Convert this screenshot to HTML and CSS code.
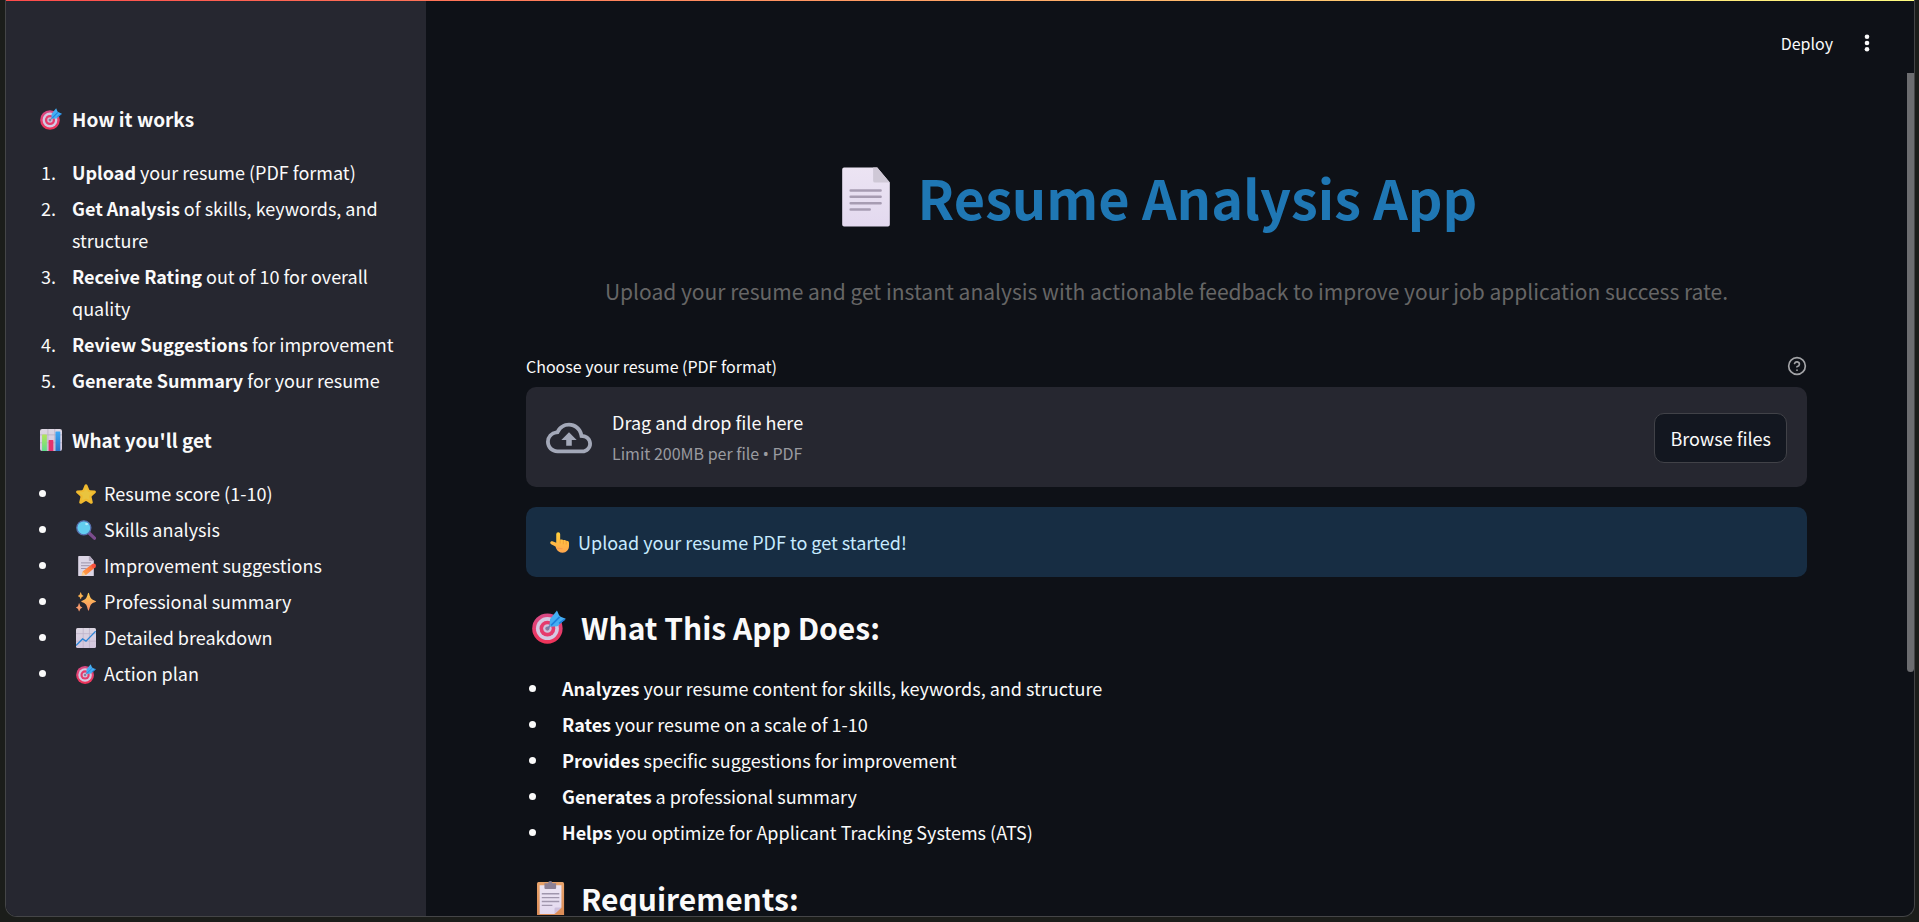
FILE: index.html
```html
<!DOCTYPE html>
<html lang="en">
<head>
<meta charset="utf-8">
<title>Resume Analysis App</title>
<link rel="stylesheet" href="styles.css">
</head>
<body>
<svg class="sprite" aria-hidden="true">
  <defs>
    <linearGradient id="paper" x1="0" y1="0" x2="0" y2="1"><stop offset="0" stop-color="#ece4f3"/><stop offset="1" stop-color="#e3d9ef"/></linearGradient>
    <linearGradient id="chartbg" x1="0" y1="0" x2="0" y2="1"><stop offset="0" stop-color="#dcd6e2"/><stop offset="1" stop-color="#d3c6de"/></linearGradient>
    <linearGradient id="green" x1="0" y1="0" x2="0" y2="1"><stop offset="0" stop-color="#b4e45a"/><stop offset="1" stop-color="#5fdc8c"/></linearGradient>
    <linearGradient id="blue" x1="0" y1="0" x2="0" y2="1"><stop offset="0" stop-color="#3fa9f5"/><stop offset="1" stop-color="#2a74c8"/></linearGradient>
    <linearGradient id="spark" x1="0" y1="0" x2="0" y2="1"><stop offset="0" stop-color="#ffd04f"/><stop offset="1" stop-color="#f98a68"/></linearGradient>
    <linearGradient id="pencil" x1="1" y1="0" x2="0" y2="1"><stop offset="0" stop-color="#f8513f"/><stop offset=".4" stop-color="#ff7b3c"/><stop offset="1" stop-color="#ffad4d"/></linearGradient>
    <linearGradient id="hand" x1="0" y1="0" x2="0" y2="1"><stop offset="0" stop-color="#ffd03b"/><stop offset="1" stop-color="#ffa64d"/></linearGradient>
    <linearGradient id="wood" x1="0" y1="0" x2="0" y2="1"><stop offset="0" stop-color="#e8a46c"/><stop offset="1" stop-color="#d98a55"/></linearGradient>
    <linearGradient id="ring" x1="0" y1="0" x2="0" y2="1"><stop offset="0" stop-color="#d84a86"/><stop offset="1" stop-color="#f03358"/></linearGradient>
  </defs>
  <symbol id="e-target" viewBox="0 0 32 32">
    <circle cx="14.500" cy="17.500" r="14.300" fill="url(#ring)"/>
    <circle cx="14.500" cy="17.500" r="10.800" fill="#d5c9e2"/>
    <circle cx="14.500" cy="17.500" r="7.400" fill="#e63a6c"/>
    <circle cx="14.500" cy="17.500" r="4" fill="#cfc2dc"/>
    <circle cx="14.500" cy="17.500" r="2" fill="#8e7a9c"/>
    <path d="M14.500 17.500 22 9.500" stroke="#6f7fae" stroke-width="1.500"/>
    <path d="M16.500 14.500 17 8.500 23.500 .5 25.500 5 27 6.300 31.800 8.300 24 15.200 18 15.800Z" fill="#45aef2"/>
    <path d="M18 14.500 26 6.500M25.500 12.500 31 8.500" stroke="#1f7fdc" stroke-width="1.500"/>
  </symbol>
  <symbol id="e-bars" viewBox="0 0 32 32">
    <rect width="32" height="32" rx="3" fill="url(#chartbg)"/>
    <path d="M11.500 0V32M21.500 0V32M0 8.500H32M0 20H32" stroke="#b9afc4" stroke-width="1.200"/>
    <path d="M3 32V9a1 1 0 0 1 1-1h5a1 1 0 0 1 1 1v23Z" fill="url(#green)"/>
    <path d="M12.500 32V17a1 1 0 0 1 1-1h5a1 1 0 0 1 1 1v15Z" fill="#e5326e"/>
    <path d="M22.500 32V4.500a1 1 0 0 1 1-1h5a1 1 0 0 1 1 1V32Z" fill="url(#blue)"/>
  </symbol>
  <symbol id="e-star" viewBox="0 0 32 32">
    <path d="M13.900 1.600a2.300 2.300 0 0 1 4.200 0l3 7.200a2 2 0 0 0 1.700 1.200l7 .5a2.300 2.300 0 0 1 1.300 4l-5.500 4.800a2 2 0 0 0-.6 1.900l1.800 7.700a2.300 2.300 0 0 1-3.400 2.500l-6.400-3.900a2 2 0 0 0-2 0l-6.400 3.900a2.300 2.300 0 0 1-3.400-2.500L7 21.200a2 2 0 0 0-.6-1.900L.9 14.500a2.300 2.300 0 0 1 1.300-4l7-.5a2 2 0 0 0 1.700-1.200Z" fill="#f0b92e"/>
    <path d="m16 5 3.500 7.500 7.500 1-6 5.500 1.500 7.500L16 23l-6.500 3.500L11 19l-6-5.500 7.500-1Z" fill="#e9c43f"/>
  </symbol>
  <symbol id="e-search" viewBox="0 0 32 32">
    <path d="m20 20 9.500 9" stroke="#7b4c8d" stroke-width="5.500" stroke-linecap="round"/>
    <circle cx="12.500" cy="12.500" r="11.300" fill="#62cdf0" stroke="#576fae" stroke-width="2"/>
    <ellipse cx="17" cy="6.500" rx="2.500" ry="1.700" fill="#b5ecfb"/>
  </symbol>
  <symbol id="e-doc" viewBox="0 0 32 32">
    <path d="M4.300.3H22l6.700 8v22.400a1 1 0 0 1-1 1H4.300a1 1 0 0 1-1-1V1.300a1 1 0 0 1 1-1Z" fill="url(#paper)"/>
    <path d="M19.800.3H22L28.700 8.300H20.800a1 1 0 0 1-1-1Z" fill="#cfc8d6"/>
    <path d="M7.800 12.500H23.800M7.800 15.900H23.800M7.800 19.300H23.800M7.800 22.700H18" stroke="#a79cb2" stroke-width="1.300" stroke-linecap="round"/>
  </symbol>
  <symbol id="e-memo" viewBox="0 0 32 32">
    <path d="M4.500 0H22l6.500 7.500V31a1 1 0 0 1-1 1h-23a1 1 0 0 1-1-1V1a1 1 0 0 1 1-1Z" fill="#dcd5e5"/>
    <path d="M20.500 0H22L28.500 8H21.500a1 1 0 0 1-1-1Z" fill="#b2a8bd"/>
    <path d="M8 11H24M8 15.500H22M8 20H17" stroke="#9b90a8" stroke-width="1.500"/>
    <path d="m9 31 2-6.500L25.500 13l5.500 5-15 12.500Z" fill="url(#pencil)"/>
    <circle cx="28.500" cy="15.500" r="3.500" fill="#f8513f"/>
    <path d="m9 31 2-6 4.500 5Z" fill="#ffd18c"/>
  </symbol>
  <symbol id="e-sparkles" viewBox="0 0 32 32">
    <path d="M20 1c1.200 0 1.500 5.500 4 9s8 3.800 8 5-5.500 1.500-8 5-2.800 10-4 10-1.500-6.500-4-10-7.500-3.800-7.500-5 5-1.500 7.500-5 2.800-9 4-9Z" fill="url(#spark)"/>
    <path d="M7.500.5c.7 0 1 2.800 1.800 3.700S12 5.500 12 6.200s-1.900.9-2.700 1.900-1.100 3.400-1.800 3.400-1-2.500-1.800-3.400S3 6.900 3 6.200s1.900-1 2.700-2S6.800.5 7.500.5Z" fill="#fbb14f"/>
    <path d="M5 18c.8 0 1.200 3.500 2.100 4.600s3 1.200 3 2-2.100 1-3 2.100S5.800 31 5 31s-1.100-3.200-2-4.300-3-1.300-3-2.100 2.100-1 3-2S4.200 18 5 18Z" fill="#f79a6c"/>
  </symbol>
  <symbol id="e-trend" viewBox="0 0 32 32">
    <rect width="32" height="32" rx="2.500" fill="url(#chartbg)"/>
    <path d="M11.500 0V32M21.500 0V32M0 9H32M0 21H32" stroke="#bdb2c8" stroke-width="1.200"/>
    <path d="m0 28 10.500-10.500 5.500 3.500L31.500 5" stroke="#2e86d6" stroke-width="2.200" fill="none"/>
  </symbol>
  <symbol id="e-point" viewBox="0 0 32 32">
    <path d="M9.500 3.500a3 3 0 0 1 6 0V12c1-1 4-1 4.700.6 1.200-.9 3.700-.6 4.300 1 1.800-.6 4.500.4 4.500 3V21c0 6.500-4.500 10.500-9.500 10.500-5 0-8.500-2.500-10-6.500l-1.200-3-6.500-3.500c-3-1.700-1-5.200 2-4.300l5.700 2Z" fill="url(#hand)"/>
    <path d="M15.500 12v5M20.300 13v5M24.700 14v4.500" stroke="#ea9235" stroke-width="1" stroke-linecap="round"/>
    <path d="M10 25c3-1 5 .5 9 .5" stroke="#f58b50" stroke-width="1" fill="none"/>
  </symbol>
  <symbol id="e-clip" viewBox="0 0 32 32">
    <rect x="4.700" y="1" width="25.500" height="33" rx="1.500" fill="url(#wood)"/>
    <path d="M7.200 4H27.700V25L21.200 31H7.200Z" fill="url(#paper)"/>
    <path d="M27.700 25H22.200a1 1 0 0 0-1 1v5Z" fill="#cdbfdc"/>
    <path d="M11.700 2H15.200a2 2 0 0 1 4 0H22.700V6.500a1 1 0 0 1-1 1H12.700a1 1 0 0 1-1-1Z" fill="#8d8196"/>
    <path d="M9.200 12H25.700M9.200 15.700H25.700M9.200 19.300H25.700M9.200 23H19.200" stroke="#a096ad" stroke-width="1.200"/>
  </symbol>
</svg>

<div class="window">
  <aside class="sidebar">
    <h3 class="side-title"><svg class="emoji emoji-h3"><use href="#e-target"/></svg>How it works</h3>
    <ol class="list side-list">
      <li><strong>Upload</strong> your resume (PDF format)</li>
      <li><strong>Get Analysis</strong> of skills, keywords, and structure</li>
      <li><strong>Receive Rating</strong> out of 10 for overall quality</li>
      <li><strong>Review Suggestions</strong> for improvement</li>
      <li><strong>Generate Summary</strong> for your resume</li>
    </ol>
    <h3 class="side-title"><svg class="emoji emoji-h3"><use href="#e-bars"/></svg>What you'll get</h3>
    <ul class="list side-list">
      <li><svg class="emoji emoji-li"><use href="#e-star"/></svg>Resume score (1-10)</li>
      <li><svg class="emoji emoji-li"><use href="#e-search"/></svg>Skills analysis</li>
      <li><svg class="emoji emoji-li"><use href="#e-memo"/></svg>Improvement suggestions</li>
      <li><svg class="emoji emoji-li"><use href="#e-sparkles"/></svg>Professional summary</li>
      <li><svg class="emoji emoji-li"><use href="#e-trend"/></svg>Detailed breakdown</li>
      <li><svg class="emoji emoji-li"><use href="#e-target"/></svg>Action plan</li>
    </ul>
  </aside>

  <div class="page">
    <header class="toolbar">
      <button class="deploy" type="button">Deploy</button>
      <button class="menu" type="button" aria-label="Main menu">
        <svg width="26" height="26" viewBox="0 0 26 26" fill="#fafafa"><circle cx="13" cy="6.700" r="2.300"/><circle cx="13" cy="13" r="2.300"/><circle cx="13" cy="19.300" r="2.300"/></svg>
      </button>
    </header>
    <main class="content">
      <h1 class="title"><svg class="emoji emoji-h1"><use href="#e-doc"/></svg>Resume Analysis App</h1>
      <p class="subtitle">Upload your resume and get instant analysis with actionable feedback to improve your job application success rate.</p>

      <div class="field-head">
        <label for="browse">Choose your resume (PDF format)</label>
        <button class="help" type="button" aria-label="Help">
          <svg width="20" height="20" viewBox="0 0 24 24" fill="none" stroke="#a3a4a7" stroke-width="2" stroke-linecap="round" stroke-linejoin="round"><circle cx="12" cy="12" r="10"/><path d="M9.090 9a3 3 0 0 1 5.830 1c0 2-3 3-3 3M12 17h.010"/></svg>
        </button>
      </div>
      <section class="dropzone">
        <svg class="cloud" viewBox="0 0 24 24" fill="#a3a8b8"><path d="M19.350 10.040A7.490 7.490 0 0 0 12 4C9.110 4 6.600 5.640 5.350 8.040A5.994 5.994 0 0 0 0 14c0 3.310 2.690 6 6 6h13c2.760 0 5-2.240 5-5 0-2.640-2.050-4.780-4.650-4.960zM19 18H6c-2.210 0-4-1.790-4-4 0-2.050 1.530-3.760 3.560-3.970l1.070-.11.5-.95A5.469 5.469 0 0 1 12 6c2.620 0 4.880 1.860 5.390 4.430l.3 1.500 1.530.11A2.980 2.980 0 0 1 22 15c0 1.650-1.350 3-3 3zM8 13h2.550v3h2.900v-3H16l-4-4z"/></svg>
        <div class="drop-text">
          <span class="drop-main">Drag and drop file here</span>
          <span class="drop-sub">Limit 200MB per file <span class="dot">•</span> PDF</span>
        </div>
        <button class="browse" id="browse" type="button">Browse files</button>
      </section>

      <div class="info"><svg class="emoji emoji-info"><use href="#e-point"/></svg>Upload your resume PDF to get started!</div>

      <h2 class="section-title"><svg class="emoji emoji-h2"><use href="#e-target"/></svg>What This App Does:</h2>
      <ul class="list main-list">
        <li><strong>Analyzes</strong> your resume content for skills, keywords, and structure</li>
        <li><strong>Rates</strong> your resume on a scale of 1-10</li>
        <li><strong>Provides</strong> specific suggestions for improvement</li>
        <li><strong>Generates</strong> a professional summary</li>
        <li><strong>Helps</strong> you optimize for Applicant Tracking Systems (ATS)</li>
      </ul>
      <h2 class="section-title"><svg class="emoji emoji-h2"><use href="#e-clip"/></svg>Requirements:</h2>
    </main>
    <div class="scroll-thumb"></div>
  </div>
  <div class="accent"></div>
</div>
</body>
</html>
```
FILE: styles.css
```css
* {
  box-sizing: border-box;
}

body {
  margin: 0;
  height: 100vh;
  padding: 0 4px 5px 5px;
  overflow: hidden;
  background: #1b1d1a;
  color: #fafafa;
  font: 18px/32px "Noto Sans CJK SC", "Noto Sans", sans-serif;
}

h1, h2, h3, p, ul, ol {
  margin: 0;
}

button {
  border: 0;
  padding: 0;
  background: none;
  color: inherit;
  font: inherit;
}

.sprite {
  position: absolute;
  width: 0;
  height: 0;
}

.emoji {
  flex: none;
}

.window {
  position: relative;
  display: flex;
  height: 100%;
  overflow: hidden;
  border: 1px solid #444547;
  border-top: 0;
  border-radius: 0 0 12px 12px;
  background: #0e1117;
}

.accent {
  position: absolute;
  top: 0;
  left: 0;
  right: 0;
  height: 1px;
  background: linear-gradient(90deg, #ff4b4b, #fffd80);
}

/* Sidebar */
.sidebar {
  flex: none;
  width: 420px;
  padding: 105px 30px 0;
  background: #262730;
}

.side-title {
  display: flex;
  align-items: center;
  gap: 10px;
  padding-left: 4px;
  font-size: 19px;
  line-height: 28px;
}

.emoji-h3 {
  width: 22px;
  height: 22px;
}

.list li {
  padding-left: 12px;
}

.list li + li {
  margin-top: 4px;
}

.side-list {
  margin: 23px 0 30px;
  padding-left: 24px;
}

.emoji-li {
  width: 20px;
  height: 20px;
  margin: 0 8px 0 4px;
  vertical-align: -3px;
}

/* Main area */
.page {
  position: relative;
  flex: 1;
  min-width: 0;
}

.toolbar {
  display: flex;
  align-items: center;
  justify-content: flex-end;
  gap: 21px;
  height: 73px;
  padding: 12px 34px 0 0;
}

.deploy {
  font-size: 16px;
}

.menu {
  display: flex;
}

.content {
  padding: 0 107px 0 100px;
}

.title {
  display: flex;
  align-items: center;
  justify-content: center;
  gap: 22px;
  margin-top: 88px;
  padding-right: 20px;
  color: #1f77b4;
  font-size: 54px;
  line-height: 72px;
}

.emoji-h1 {
  width: 60px;
  height: 60px;
}

.subtitle {
  margin-top: 42px;
  color: #666666;
  font-size: 21px;
  text-align: center;
}

.field-head {
  display: flex;
  align-items: center;
  justify-content: space-between;
  margin-top: 43px;
  font-size: 16px;
}

.help {
  display: flex;
}

.dropzone {
  display: flex;
  align-items: center;
  gap: 20px;
  margin-top: 5px;
  padding: 19px 20px 18px;
  border-radius: 10px;
  background: #262730;
}

.cloud {
  flex: none;
  width: 46px;
  height: 46px;
}

.drop-text {
  display: flex;
  flex: 1;
  flex-direction: column;
}

.drop-sub {
  color: #9a9ba0;
  font-size: 16px;
  line-height: 30px;
}

.dot {
  font-family: "Noto Sans", sans-serif;
}

.browse {
  height: 50px;
  padding: 0 15px;
  border: 1px solid #414248;
  border-radius: 10px;
  background: #131720;
}

.info {
  display: flex;
  align-items: center;
  gap: 7px;
  margin-top: 20px;
  padding: 19px 24px;
  border-radius: 10px;
  background: #172d43;
  color: #c7ebff;
}

.emoji-info {
  width: 21px;
  height: 21px;
}

.section-title {
  display: flex;
  align-items: center;
  gap: 15px;
  margin-top: 28px;
  padding-left: 6px;
  font-size: 30px;
  line-height: 44px;
}

.emoji-h2 {
  width: 34px;
  height: 34px;
}

.main-list {
  margin-top: 23px;
  padding-left: 24px;
}

.scroll-thumb {
  position: absolute;
  top: 73px;
  right: 0;
  width: 7px;
  height: calc(66% - 6px);
  border-radius: 0 0 4px 4px;
  background: #6c6d70;
}
```
